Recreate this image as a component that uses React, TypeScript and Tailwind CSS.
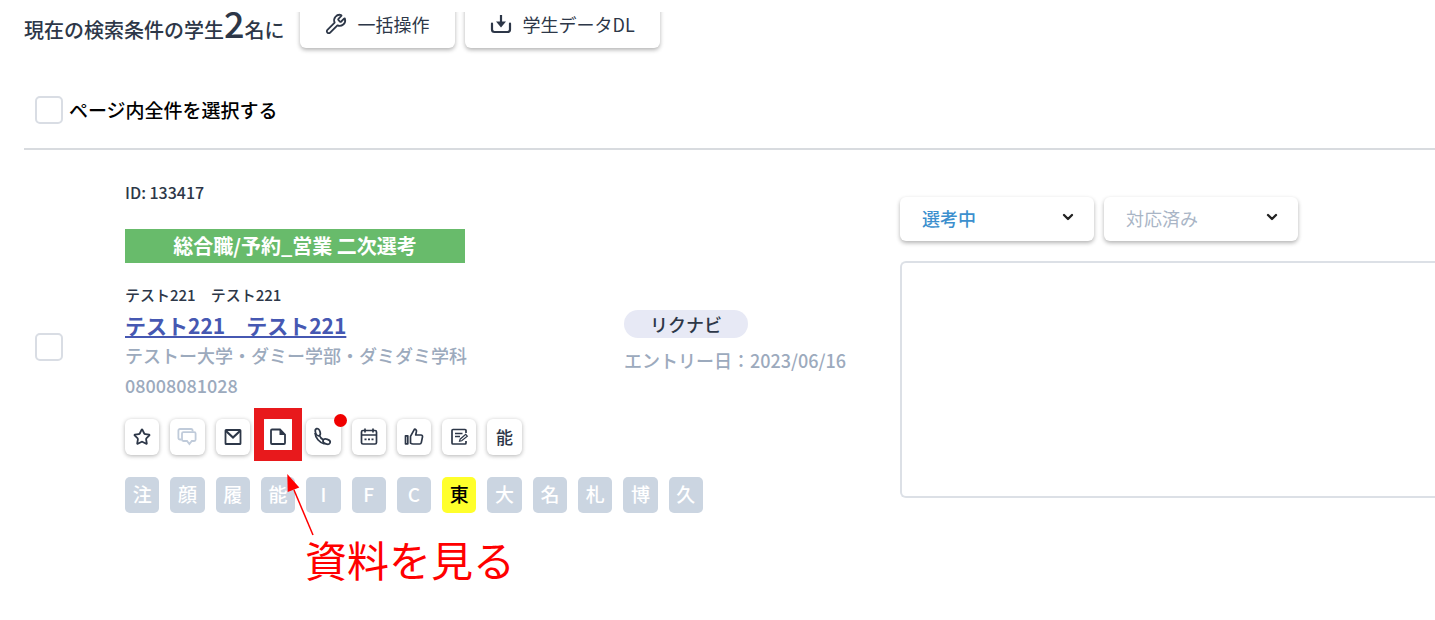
import type { ReactNode } from "react";
import { ChevronDown, Star, Wrench } from "lucide-react";
import clsx from "clsx";

type Action = {
  label: string;
  icon: ReactNode;
  muted?: boolean;
  badge?: boolean;
  highlighted?: boolean;
};

type Tag = { label: string; active?: boolean };

function DownloadIcon() {
  return (
    <svg viewBox="0 0 22 22" className="size-[22px]" fill="none" stroke="currentColor" strokeWidth="2.2">
      <path d="M2 10.5v6a2.500 2.500 0 0 0 2.500 2.500h13a2.500 2.500 0 0 0 2.500-2.500v-6" strokeLinecap="round" />
      <path d="M11 2v8" />
      <path d="M6 8.500h10l-5 6z" fill="currentColor" stroke="none" />
    </svg>
  );
}

function ChatIcon() {
  return (
    <svg viewBox="0 0 20 20" className="size-5" fill="none" stroke="currentColor" strokeWidth="1.8">
      <path d="M4.500 12.500H3a1.600 1.600 0 0 1-1.600-1.600V3.600A1.600 1.600 0 0 1 3 2h11a1.600 1.600 0 0 1 1.600 1.600v.9" />
      <path d="M6.400 5.200h10.800a1.400 1.400 0 0 1 1.400 1.400v6a1.400 1.400 0 0 1-1.400 1.400h-2.400l-2.400 3-2.400-3H6.400A1.400 1.400 0 0 1 5 12.600V6.600a1.400 1.400 0 0 1 1.400-1.400z" />
    </svg>
  );
}

function MailIcon() {
  return (
    <svg viewBox="0 0 20 20" className="size-5" fill="none" stroke="currentColor" strokeWidth="1.8">
      <rect x="2.500" y="3" width="15" height="14" rx="0.600" />
      <path d="M3 4l7 6.500L17 4" strokeWidth="2.200" />
    </svg>
  );
}

function DocumentIcon() {
  return (
    <svg viewBox="0 0 20 20" className="size-5" fill="none" stroke="currentColor" strokeWidth="1.8">
      <path d="M4 2.500h8l5 5V16a1 1 0 0 1-1 1H4a1 1 0 0 1-1-1V3.500a1 1 0 0 1 1-1z" />
      <path d="M11.500 2.500V8H17z" fill="currentColor" stroke="none" />
    </svg>
  );
}

function PhoneIcon() {
  return (
    <svg viewBox="0 0 20 20" className="size-5" fill="none" stroke="currentColor" strokeWidth="1.7">
      <ellipse cx="4.800" cy="5.200" rx="2.300" ry="3.700" transform="rotate(-18 4.800 5.200)" />
      <ellipse cx="13.600" cy="14.600" rx="3.700" ry="2.400" transform="rotate(18 13.600 14.600)" />
      <path d="M2 6c.4 4.800 4.200 9.600 9.500 11" />
      <path d="M6.500 8.500c.6 1.800 2.200 3.500 4 4.500" />
    </svg>
  );
}

function CalendarIcon() {
  return (
    <svg viewBox="0 0 20 20" className="size-5" fill="none" stroke="currentColor" strokeWidth="1.7">
      <rect x="2.500" y="3.500" width="15" height="13.500" rx="1.500" />
      <path d="M2.500 8h15M6 1.500v4M14 1.500v4" />
      <path d="M5.500 12.300h2M9 12.300h2M12.500 12.300h2" />
    </svg>
  );
}

function ThumbIcon() {
  return (
    <svg viewBox="0 0 20 20" className="size-5" fill="none" stroke="currentColor" strokeWidth="1.7" strokeLinejoin="round">
      <path d="M6.500 9.300l4-7.100c1.500 0 2.200 1.100 1.900 2.400l-.7 3.400h5.300c1 0 1.700.9 1.500 1.900l-1.200 5.700c-.2.900-.9 1.400-1.700 1.400H9c-1 0-1.700-.3-2.500-.9z" />
      <path d="M1.500 8.800h2.300v8H1.500z" />
    </svg>
  );
}

function NoteIcon() {
  return (
    <svg viewBox="0 0 20 20" className="size-5" fill="none" stroke="currentColor" strokeWidth="1.7">
      <path d="M17 6V3.500a1 1 0 0 0-1-1H4a1 1 0 0 0-1 1V16a1 1 0 0 0 1 1h12a1 1 0 0 0 1-1v-2" />
      <path d="M6 6.500h7.500M6 9.500h5" strokeWidth="1.500" />
      <path d="M10.500 14.300l.6-2.100 5.600-4.800 1.600 1.700-5.600 4.700z" strokeWidth="1.200" />
    </svg>
  );
}

const actions: Action[] = [
  {
    label: "お気に入り",
    icon: <Star className="size-[18px]" strokeWidth={2.4} strokeLinejoin="miter" />,
  },
  { label: "チャット", icon: <ChatIcon />, muted: true },
  { label: "メール", icon: <MailIcon /> },
  { label: "資料", icon: <DocumentIcon />, highlighted: true },
  { label: "電話", icon: <PhoneIcon />, badge: true },
  { label: "日程", icon: <CalendarIcon /> },
  { label: "評価", icon: <ThumbIcon /> },
  { label: "メモ", icon: <NoteIcon /> },
  { label: "能力", icon: "能" },
];

const tags: Tag[] = [
  { label: "注" },
  { label: "顔" },
  { label: "履" },
  { label: "能" },
  { label: "I" },
  { label: "F" },
  { label: "C" },
  { label: "東", active: true },
  { label: "大" },
  { label: "名" },
  { label: "札" },
  { label: "博" },
  { label: "久" },
];

function Checkbox({ id, label }: { id: string; label?: string }) {
  return (
    <input
      id={id}
      type="checkbox"
      aria-label={label}
      className="size-7 shrink-0 appearance-none rounded-[5px] border-2 border-[#d9dde4] bg-white checked:bg-[#4a5ab5]"
    />
  );
}

function ToolbarButton({ icon, children }: { icon: ReactNode; children: ReactNode }) {
  return (
    <button
      type="button"
      className="-mt-3 flex h-12 items-center gap-[11px] rounded-md bg-white px-[25px] text-[18px] shadow-[0_2px_4px_rgba(0,0,0,0.3)]"
    >
      {icon}
      {children}
    </button>
  );
}

function StatusSelect({
  label,
  value,
  className,
}: {
  label: string;
  value: string;
  className: string;
}) {
  return (
    <div className="relative w-[194px]">
      <select
        aria-label={label}
        defaultValue={value}
        className={clsx(
          "h-11 w-full appearance-none rounded-md bg-white pr-12 pl-[22px] text-[18px] shadow-[0_2px_4px_rgba(0,0,0,0.3)]",
          className,
        )}
      >
        <option>{value}</option>
      </select>
      <ChevronDown
        className="pointer-events-none absolute top-3 right-[18px] size-4 text-[#222]"
        strokeWidth={3.5}
      />
    </div>
  );
}

// Red frame, arrow and caption that sit on top of the document button
function Callout({ text }: { text: string }) {
  return (
    <div className="pointer-events-none absolute -top-[11px] -left-[7px] z-10 text-[#f00]">
      <div className="h-[53px] w-12 border-x-10 border-y-11 border-[#e8191c]" />
      <svg viewBox="0 0 30 64" className="absolute top-[65px] left-8 h-16 w-[30px]">
        <path d="M8 17L27 62" stroke="currentColor" strokeWidth="1.5" />
        <path d="M1.300 1L1.700 19l11.600-4.500z" fill="currentColor" />
      </svg>
      <p className="absolute top-[121px] left-[51px] text-[42px] leading-[60px] whitespace-nowrap">
        {text}
      </p>
    </div>
  );
}

export default function App() {
  return (
    <main className="bg-white pt-3 pb-24 pl-6 font-['Noto_Sans_CJK_JP',sans-serif] text-[#2d3748]">
      <div className="flex items-start">
        <p className="flex items-baseline text-[20px] leading-8 font-medium">
          現在の検索条件の学生<span className="text-[36px] leading-5">2</span>名に
        </p>
        <div className="flex gap-[10px] overflow-hidden pr-2 pb-4 pl-[15px]">
          <ToolbarButton icon={<Wrench className="size-[22px]" />}>一括操作</ToolbarButton>
          <ToolbarButton icon={<DownloadIcon />}>学生データDL</ToolbarButton>
        </div>
      </div>

      <div className="flex items-center gap-[6px] border-b-2 border-[#d8dbdf] pt-8 pb-6 pl-[11px]">
        <Checkbox id="select-all" />
        <label htmlFor="select-all" className="text-[19px] leading-7 font-medium text-black">
          ページ内全件を選択する
        </label>
      </div>

      <article className="flex items-center pt-[31px] pl-[11px]">
        <Checkbox id="student-133417" label="テスト221を選択する" />

        <div className="ml-[62px] w-[499px] shrink-0">
          <p className="text-[16px] leading-[22px] font-medium">ID: 133417</p>
          <p className="mt-[26px] h-[34px] w-[340px] bg-[#68bb6b] text-center text-[20px] leading-[34px] font-bold text-white">
            総合職/予約_営業 二次選考
          </p>
          <div className="mt-[17px] leading-[30px]">
            <p className="text-[15px] font-medium">テスト221　テスト221</p>
            <h2 className="text-[21px] font-bold">
              <a href="#student" className="text-[#4658b2] underline decoration-2 underline-offset-2">
                テスト221　テスト221
              </a>
            </h2>
            <div className="text-[18px] font-medium text-[#9caabd]">
              <p>テストー大学・ダミー学部・ダミダミ学科</p>
              <p>08008081028</p>
            </div>
          </div>

          <div className="mt-[19px] grid w-[578px] grid-cols-13 gap-x-[11px]">
            {actions.map((action) => (
              <div key={action.label} className="relative">
                <button
                  type="button"
                  aria-label={action.label}
                  className={clsx(
                    "flex h-9 w-full items-center justify-center rounded-md bg-white text-[17px] font-medium shadow-[0_1px_4px_rgba(0,0,0,0.3)]",
                    action.muted && "text-[#c0cbda]",
                  )}
                >
                  {action.icon}
                </button>
                {action.badge && (
                  <span className="absolute -top-[5px] -right-[6px] size-[13px] rounded-full bg-[#f00000]" />
                )}
                {action.highlighted && <Callout text="資料を見る" />}
              </div>
            ))}
          </div>

          <ul className="mt-[22px] grid w-[578px] grid-cols-13 gap-x-[11px]">
            {tags.map((tag) => (
              <li
                key={tag.label}
                className={clsx(
                  "h-9 rounded-[5px] text-center text-[19px] leading-[34px] font-medium",
                  tag.active ? "bg-[#ffff2b] text-black" : "bg-[#cbd5e1] text-white",
                )}
              >
                {tag.label}
              </li>
            ))}
          </ul>
        </div>

        <div className="w-[276px] shrink-0 pb-[10px]">
          <span className="inline-block rounded-full bg-[#e7e9f5] px-[26px] text-[18px] leading-7 font-medium">
            リクナビ
          </span>
          <p className="mt-2 text-[18px] leading-7 font-medium text-[#9caabd]">
            エントリー日：2023/06/16
          </p>
        </div>

        <div className="min-w-0 flex-1">
          <div className="flex gap-[10px]">
            <StatusSelect label="選考状況" value="選考中" className="font-medium text-[#3c8fce]" />
            <StatusSelect label="対応状況" value="対応済み" className="text-[#a9b5c6]" />
          </div>
          <textarea
            aria-label="メモ"
            className="mt-5 block h-[237px] w-full resize-none rounded-l-md border-2 border-r-0 border-[#dce0e6] p-3 text-[18px]"
          />
        </div>
      </article>
    </main>
  );
}
